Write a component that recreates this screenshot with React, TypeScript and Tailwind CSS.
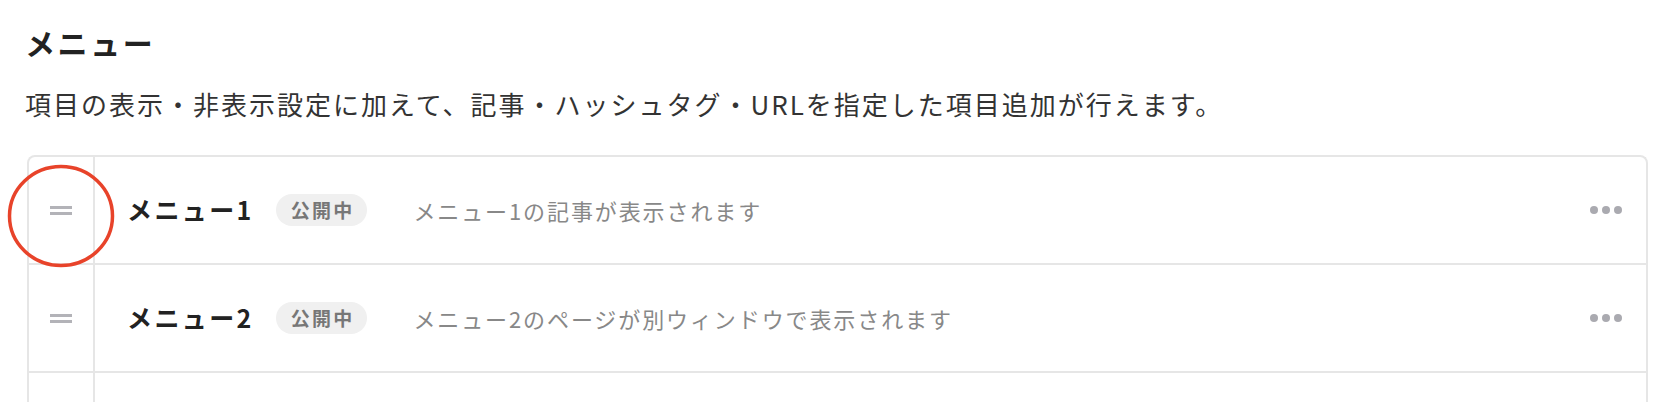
import React from 'react';

const items = [
  { title: 'メニュー1', desc: 'メニュー1の記事が表示されます' },
  { title: 'メニュー2', desc: 'メニュー2のページが別ウィンドウで表示されます' },
];

function Handle() {
  return (
    <div className="flex flex-col gap-[3px]">
      <span className="block h-[3px] w-[22px] bg-[#b3b3b8]" />
      <span className="block h-[3px] w-[22px] bg-[#b3b3b8]" />
    </div>
  );
}

function MenuRow({ title, desc }: { title: string; desc: string }) {
  return (
    <div className="flex h-[108px] border-b-2 border-[#e6e6e6]">
      <div className="flex w-[66px] shrink-0 items-center justify-center border-r-2 border-[#e6e6e6]">
        <Handle />
      </div>
      <div className="flex flex-1 items-center pl-[32px] pr-[24px]">
        <span className="text-[25px] font-bold tracking-[2.4px] text-[#222]">{title}</span>
        <span className="ml-[22px] flex h-[32px] items-center rounded-full bg-[#f0f0f0] pl-[15px] pr-[13px] text-[19px] font-bold tracking-[2.2px] text-[#777]">
          公開中
        </span>
        <span className="ml-[46px] text-[22px] tracking-[1.9px] text-[#888]">{desc}</span>
        <div className="ml-auto flex gap-[4px]">
          <span className="block h-[8px] w-[8px] rounded-full bg-[#aaaab0]" />
          <span className="block h-[8px] w-[8px] rounded-full bg-[#aaaab0]" />
          <span className="block h-[8px] w-[8px] rounded-full bg-[#aaaab0]" />
        </div>
      </div>
    </div>
  );
}

export default function App() {
  return (
    <div
      className="relative h-[402px] w-[1676px] overflow-hidden bg-white pl-[25px] pr-[28px] pt-[23px]"
      style={{ fontFamily: '"Noto Sans CJK JP", "Noto Sans", sans-serif' }}
    >
      <h2 className="text-[30px] font-bold leading-[38px] tracking-[2.6px] text-[#222]">メニュー</h2>
      <p className="mt-[25px] text-[26px] leading-[36px] tracking-[2px] text-[#333]">
        項目の表示・非表示設定に加えて、記事・ハッシュタグ・URLを指定した項目追加が行えます。
      </p>
      <div className="ml-[2px] mt-[33px] rounded-t-[8px] border-2 border-b-0 border-[#e6e6e6]">
        {items.map((item) => (
          <MenuRow key={item.title} title={item.title} desc={item.desc} />
        ))}
        <div className="flex h-[60px]">
          <div className="w-[66px] shrink-0 border-r-2 border-[#e6e6e6]" />
        </div>
      </div>
      {/* annotation circle */}
      <svg
        className="pointer-events-none absolute left-[7px] top-[164px]"
        width="108"
        height="104"
        viewBox="0 0 108 104"
      >
        <ellipse cx="54" cy="52" rx="51.5" ry="49.5" fill="none" stroke="#e8432a" strokeWidth="3.5" />
      </svg>
    </div>
  );
}
